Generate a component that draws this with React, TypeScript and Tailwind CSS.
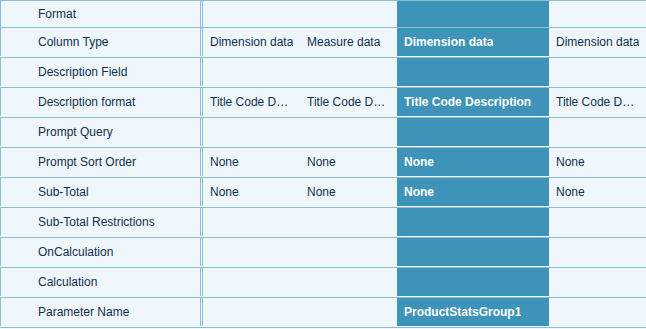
import React from "react";

type Row = { label: string; cells: [string, string, string, string]; first?: boolean };

const rows: Row[] = [
  { label: "Format", cells: ["", "", "", ""], first: true },
  { label: "Column Type", cells: ["Dimension data", "Measure data", "Dimension data", "Dimension data"] },
  { label: "Description Field", cells: ["", "", "", ""] },
  { label: "Description format", cells: ["Title Code Description", "Title Code Description", "Title Code Description", "Title Code Description"] },
  { label: "Prompt Query", cells: ["", "", "", ""] },
  { label: "Prompt Sort Order", cells: ["None", "None", "None", "None"] },
  { label: "Sub-Total", cells: ["None", "None", "None", "None"] },
  { label: "Sub-Total Restrictions", cells: ["", "", "", ""] },
  { label: "OnCalculation", cells: ["", "", "", ""] },
  { label: "Calculation", cells: ["", "", "", ""] },
  { label: "Parameter Name", cells: ["", "", "ProductStatsGroup1", ""] },
];

const PropertyRow = ({ row }: { row: Row }) => {
  return (
    <div className={`flex border-b border-[#8dbdd4] ${row.first ? "h-[27px]" : "h-[30px] pb-px"}`}>
      <div className="w-[201px] shrink-0 flex items-center border-l border-r border-[#8dbdd4] pl-[37px] text-[#10304f]">
        {row.label}
      </div>
      <div className="w-px shrink-0" />
      <div className="flex flex-1 border-l border-[#8dbdd4]">
        <div className="w-[97px] shrink-0 flex items-center pl-[7px] pr-[6px] text-[#10304f]">
          <span className="truncate">{row.cells[0]}</span>
        </div>
        <div className="w-[97px] shrink-0 flex items-center pl-[7px] pr-[6px] text-[#10304f]">
          <span className="truncate">{row.cells[1]}</span>
        </div>
        <div className="w-[152px] shrink-0 flex items-center pl-[7px] pr-[6px] bg-[#3d93b8] text-white font-bold">
          <span className="truncate">{row.cells[2]}</span>
        </div>
        <div className="w-[97px] shrink-0 flex items-center pl-[7px] pr-[6px] text-[#10304f]">
          <span className="truncate">{row.cells[3]}</span>
        </div>
      </div>
    </div>
  );
};

export default function App() {
  return (
    <div className="w-[646px] h-[329px] overflow-hidden bg-[#eff7fd] border-t border-[#8dbdd4] text-[12px] font-['Liberation_Sans',Arial,sans-serif]">
      {rows.map((row) => (
        <PropertyRow key={row.label} row={row} />
      ))}
    </div>
  );
}
